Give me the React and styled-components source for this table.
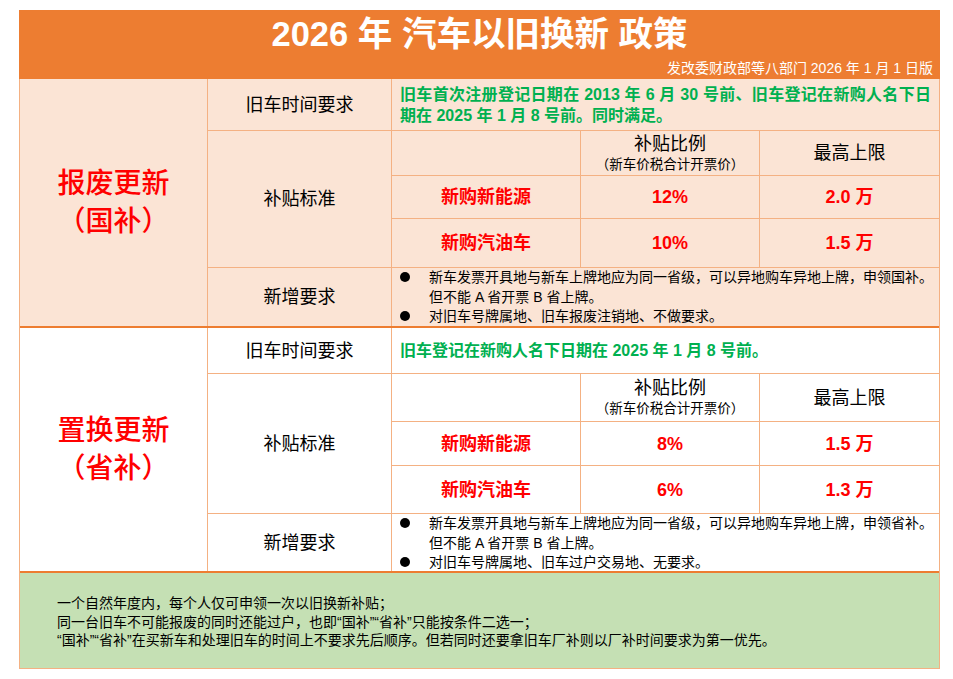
import React from 'react';
import styled, {createGlobalStyle} from 'styled-components';

const FONT = `"Liberation Sans", "Noto Sans CJK SC", sans-serif`;
const LINE = '#f4b183';
const ORANGE = '#ed7d31';
const RED = '#ff0000';
const GREEN = '#00b050';

const sections = [
  {
    key: 'scrap',
    bg: '#fbe4d5',
    rows: [51, 44, 42, 48, 58],
    title: '报废更新',
    tag: '（国补）',
    time: '旧车首次注册登记日期在 2013 年 6 月 30 号前、旧车登记在新购人名下日期在 2025 年 1 月 8 号前。同时满足。',
    rates: [
      {name: '新购新能源', rate: '12%', cap: '2.0 万'},
      {name: '新购汽油车', rate: '10%', cap: '1.5 万'},
    ],
    notes: [
      ['新车发票开具地与新车上牌地应为同一省级，可以异地购车异地上牌，申领国补。', '但不能 A 省开票 B 省上牌。'],
      ['对旧车号牌属地、旧车报废注销地、不做要求。'],
    ],
  },
  {
    key: 'replace',
    bg: '#ffffff',
    rows: [45, 47, 43, 47, 57],
    title: '置换更新',
    tag: '（省补）',
    time: '旧车登记在新购人名下日期在 2025 年 1 月 8 号前。',
    rates: [
      {name: '新购新能源', rate: '8%', cap: '1.5 万'},
      {name: '新购汽油车', rate: '6%', cap: '1.3 万'},
    ],
    notes: [
      ['新车发票开具地与新车上牌地应为同一省级，可以异地购车异地上牌，申领省补。', '但不能 A 省开票 B 省上牌。'],
      ['对旧车号牌属地、旧车过户交易地、无要求。'],
    ],
  },
];

const footerLines = [
  '一个自然年度内，每个人仅可申领一次以旧换新补贴；',
  '同一台旧车不可能报废的同时还能过户，也即“国补”“省补”只能按条件二选一；',
  '“国补”“省补”在买新车和处理旧车的时间上不要求先后顺序。但若同时还要拿旧车厂补则以厂补时间要求为第一优先。',
];

const App = () => {
  return (
      <>
        <GlobalStyle/>
        <Sheet>
          <Header>
            <Title>2026 年 汽车以旧换新 政策</Title>
            <Issuer>发改委财政部等八部门 2026 年 1 月 1 日版</Issuer>
          </Header>

          {sections.map((s) => (
              <Section key={s.key} $bg={s.bg}
                       $rows={s.rows.map((h) => `${h}px`).join(' ')}>
                <SideLabel>
                  <span>{s.title}</span>
                  <span>{s.tag}</span>
                </SideLabel>

                <RowLabel>旧车时间要求</RowLabel>
                <TimeText>{s.time}</TimeText>

                <RowLabel $rowSpan={3}>补贴标准</RowLabel>
                <Cell/>
                <HeadCell>
                  <span>补贴比例</span>
                  <HeadNote>（新车价税合计开票价）</HeadNote>
                </HeadCell>
                <HeadCell>最高上限</HeadCell>

                {s.rates.map((r) => (
                    <React.Fragment key={r.name}>
                      <DataCell>{r.name}</DataCell>
                      <DataCell>{r.rate}</DataCell>
                      <DataCell>{r.cap}</DataCell>
                    </React.Fragment>
                ))}

                <RowLabel>新增要求</RowLabel>
                <Notes>
                  {s.notes.map((lines, i) => (
                      <NoteItem key={i}>
                        <Dot/>
                        <div>
                          {lines.map((l) => <div key={l}>{l}</div>)}
                        </div>
                      </NoteItem>
                  ))}
                </Notes>
              </Section>
          ))}

          <Footer>
            {footerLines.map((l) => <div key={l}>{l}</div>)}
          </Footer>
        </Sheet>
      </>
  );
};

export default App;

const GlobalStyle = createGlobalStyle`
  body {
    margin: 0;
    background: #ffffff;
    font-family: ${FONT};
    color: #000;
  }
`;

const Sheet = styled.div`
  box-sizing: border-box;
  width: 921px;
  margin: 10px 0 0 19px;
  border: 1px solid ${LINE};
  border-top: none;
  display: flex;
  flex-direction: column;
`;

const Header = styled.div`
  height: 69px;
  background: ${ORANGE};
  color: #fff;
  display: flex;
  flex-direction: column;
  margin: 0 -1px;
`;

const Title = styled.div`
  margin-top: 4px;
  height: 40px;
  line-height: 40px;
  text-align: center;
  font-size: 34.5px;
  font-weight: bold;
`;

const Issuer = styled.div`
  margin-top: 5px;
  line-height: 18px;
  font-size: 14px;
  text-align: right;
  padding-right: 7px;
`;

const Section = styled.div`
  display: grid;
  grid-template-columns: 187px 183px 188px 178px 179px;
  grid-template-rows: ${({$rows}) => $rows};
  gap: 1px;
  background: ${LINE};
  border-bottom: 2px solid ${ORANGE};

  & > * {
    background: ${({$bg}) => $bg};
  }
`;

const Cell = styled.div``;

const SideLabel = styled.div`
  grid-row: span 5;
  display: flex;
  flex-direction: column;
  align-items: center;
  justify-content: center;
  color: ${RED};
  font-size: 28px;
  font-weight: 500;
  line-height: 38px;
`;

const RowLabel = styled.div`
  grid-row: span ${({$rowSpan}) => $rowSpan || 1};
  display: flex;
  align-items: center;
  justify-content: center;
  font-size: 18px;
  line-height: 22px;
`;

const TimeText = styled.div`
  grid-column: span 3;
  display: flex;
  align-items: center;
  padding: 0 8px;
  color: ${GREEN};
  font-size: 16px;
  font-weight: bold;
  line-height: 21px;
  text-align: justify;
`;

const HeadCell = styled.div`
  display: flex;
  flex-direction: column;
  align-items: center;
  justify-content: center;
  font-size: 18px;
  line-height: 22px;
`;

const HeadNote = styled.span`
  font-size: 13.5px;
  line-height: 19px;
`;

const DataCell = styled.div`
  display: flex;
  align-items: center;
  justify-content: center;
  color: ${RED};
  font-size: 18px;
  line-height: 22px;
  font-weight: bold;
`;

const Notes = styled.div`
  grid-column: span 3;
  padding: 0 8px;
  font-size: 14px;
  line-height: 19.5px;
`;

const NoteItem = styled.div`
  display: flex;
  white-space: nowrap;
`;

const Dot = styled.span`
  flex: 0 0 29px;
  position: relative;

  &::before {
    content: '';
    position: absolute;
    left: 0;
    top: 4px;
    width: 10px;
    height: 10px;
    border-radius: 50%;
    background: #000;
  }
`;

const Footer = styled.div`
  height: 95px;
  box-sizing: border-box;
  background: #c5e0b4;
  padding: 21px 0 0 37px;
  font-size: 14px;
  line-height: 18.5px;
`;
